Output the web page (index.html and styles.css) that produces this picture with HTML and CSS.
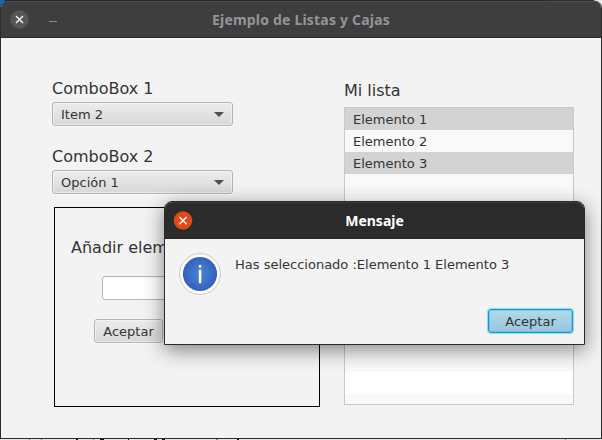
FILE: index.html
```html
<!DOCTYPE html>
<html lang="es">
<head>
<meta charset="utf-8">
<title>Ejemplo de Listas y Cajas</title>
<link rel="stylesheet" href="styles.css">
</head>
<body>
<div class="window">
  <header class="titlebar">
    <svg class="close" width="20" height="20" viewBox="0 0 20 20"><circle cx="10.5" cy="9.5" r="9.3" fill="#565656"/><path d="M7 6l7 7M14 6l-7 7" stroke="#f2f2f2" stroke-width="1.5"/></svg>
    <span class="minimize"></span>
    <h1 class="title main-title">Ejemplo de Listas y Cajas</h1>
  </header>
  <main class="content">
    <section class="left">
      <label class="label">ComboBox 1</label>
      <div class="combo"><span>Item 2</span><i class="arrow"></i></div>
      <label class="label second">ComboBox 2</label>
      <div class="combo"><span>Opción 1</span><i class="arrow"></i></div>
      <div class="panel">
        <label class="label">Añadir elemento</label>
        <div class="field"></div>
        <button class="button">Aceptar</button>
      </div>
    </section>
    <section class="right">
      <label class="label">Mi lista</label>
      <ul class="list">
        <li class="selected">Elemento 1</li>
        <li>Elemento 2</li>
        <li class="selected">Elemento 3</li>
      </ul>
    </section>
  </main>
</div>
<svg class="below" width="602" height="1" viewBox="0 0 602 1"><path d="M76 0h2v1h-2zM100 0h4v1h-4zM128 0h1v1h-1zM154 0h3v1h-3zM162 0h3v1h-3zM237 0h2v1h-2z" fill="#111"/><path d="M29 0h1v1h-1zM41 0h1v1h-1zM93 0h1v1h-1zM216 0h2v1h-2zM565 0h1v1h-1z" fill="#888"/></svg>
<div class="dialog">
  <header class="titlebar">
    <svg class="close" width="20" height="20" viewBox="0 0 20 20"><circle cx="10" cy="9.5" r="9.3" fill="#df4a16"/><path d="M6.4 6l7.2 7.2M13.6 6l-7.2 7.2" stroke="#fff" stroke-width="1.4"/></svg>
    <h2 class="title">Mensaje</h2>
  </header>
  <div class="message">
    <svg class="info" width="42" height="42" viewBox="0 0 42 42">
      <defs><radialGradient id="blue"><stop offset="0" stop-color="#4788d8"/><stop offset="1" stop-color="#355fb9"/></radialGradient></defs>
      <circle cx="21" cy="21" r="20.4" fill="#fff" stroke="#c8c8c8"/>
      <circle cx="21" cy="21" r="17.1" fill="url(#blue)"/>
      <path d="M19.8 12h2.5v2.7h-2.5zM19.8 16.8h2.5v13.4h-2.5z" fill="#fff"/>
    </svg>
    <p>Has seleccionado :Elemento 1 Elemento 3</p>
  </div>
  <footer class="actions"><button class="button primary">Aceptar</button></footer>
</div>
</body>
</html>
```
FILE: styles.css
```css
* { box-sizing: border-box; }

body {
  position: relative;
  width: 602px;
  height: 440px;
  margin: 0;
  padding-top: 1px;
  overflow: hidden;
  background: linear-gradient(90deg, #0d65cf 4px, #1c2737 5px, #1c2737 546px, #303030 547px, #303030 593px, #e8e8e8 596px);
  color: #333;
  font: 13px/22px "DejaVu Sans", sans-serif;
}

.window {
  height: 438px;
  display: flex;
  flex-direction: column;
  border: 1px solid #2b2b2b;
  border-top: 0;
  border-radius: 7px 7px 0 0;
  overflow: hidden;
  background: #f3f3f3;
}

.titlebar {
  display: flex;
  flex: none;
  align-items: center;
  position: relative;
  height: 37px;
  padding-left: 8px;
  border-top: 1px solid #4c4c4c;
  border-bottom: 1px solid #292929;
  background: #3e3e3e;
  color: #939598;
}

.minimize {
  width: 8px;
  height: 1px;
  margin: 4px 0 0 20px;
  background: #8e8e8e;
}

.title {
  position: absolute;
  inset: 0;
  margin: 0;
  text-align: center;
  font: bold 14px/36px "Noto Sans", sans-serif;
}

.main-title { letter-spacing: .2px; }

.content {
  display: flex;
  flex: 1;
  padding: 39px 0 0 51px;
}

.left { width: 292px; }

.label {
  display: block;
  height: 25px;
  font-size: 16px;
  line-height: 24px;
}

.second { margin-top: 19px; }

.combo, .button, .field {
  border: 1px solid #b5b5b5;
  border-radius: 3px;
}

.combo, .button {
  height: 24px;
  background: linear-gradient(#ececec, #d8d8d8);
  box-shadow: inset 0 0 0 1px rgba(255, 255, 255, .45), 0 1px 0 #fafafa;
}

.combo {
  display: flex;
  align-items: center;
  justify-content: space-between;
  width: 181px;
  padding: 0 8px;
}

.combo span { padding-top: 2px; }

.arrow {
  border: 5px solid transparent;
  border-top: 5px solid #4e4e4e;
  border-bottom: 0;
}

.panel {
  width: 266px;
  height: 200px;
  margin: 13px 0 0 2px;
  padding: 28px 0 0 16px;
  border: 1px solid #000;
}

.field {
  width: 150px;
  height: 24px;
  margin: 15px 0 19px 31px;
  background: linear-gradient(#f6f6f6, #fff 3px);
}

.button {
  display: block;
  width: 69px;
  padding: 2px 0 0;
  color: #333;
  font: 13px/20px "DejaVu Sans", sans-serif;
}

.panel .button { margin-left: 23px; }

.right { width: 230px; padding-top: 2px; }
.right .label { height: 28px; }

.list {
  height: 298px;
  margin: 0;
  padding: 0;
  border: 1px solid #c8c8c8;
  background: repeating-linear-gradient(#fff 0 22px, #f9f9f9 22px 44px);
  list-style: none;
}

.list li { height: 22px; padding: 1px 8px 0; line-height: 21px; }
.list .selected { background: #d3d3d3; }

.below {
  display: block;
  background: #ebe6e9;
}

.dialog {
  position: absolute;
  left: 164px;
  top: 201px;
  width: 421px;
  height: 144px;
  border: 1px solid #2a2a2a;
  border-radius: 8px 8px 0 0;
  background: #f3f3f3;
  box-shadow: 0 5px 20px rgba(0, 0, 0, .48);
}

.dialog .titlebar {
  border-top-color: #3b3b3b;
  border-bottom-color: #242424;
  border-radius: 7px 7px 0 0;
  background: #2b2b2b;
  color: #fff;
}

.message {
  display: flex;
  padding: 14px 0 0 14px;
}

.message p { margin: 1px 0 0 14px; }

.actions {
  display: flex;
  justify-content: flex-end;
  padding: 14px 11px 0 0;
}

.primary {
  width: 85px;
  height: 24px;
  padding-top: 1px;
  border-color: #039ed3;
  background: linear-gradient(#b0dbed, #9ac4d8);
  box-shadow: inset 0 0 0 1px rgba(3, 158, 211, .25), 0 0 1px 1px rgba(3, 158, 211, .35);
}
```
